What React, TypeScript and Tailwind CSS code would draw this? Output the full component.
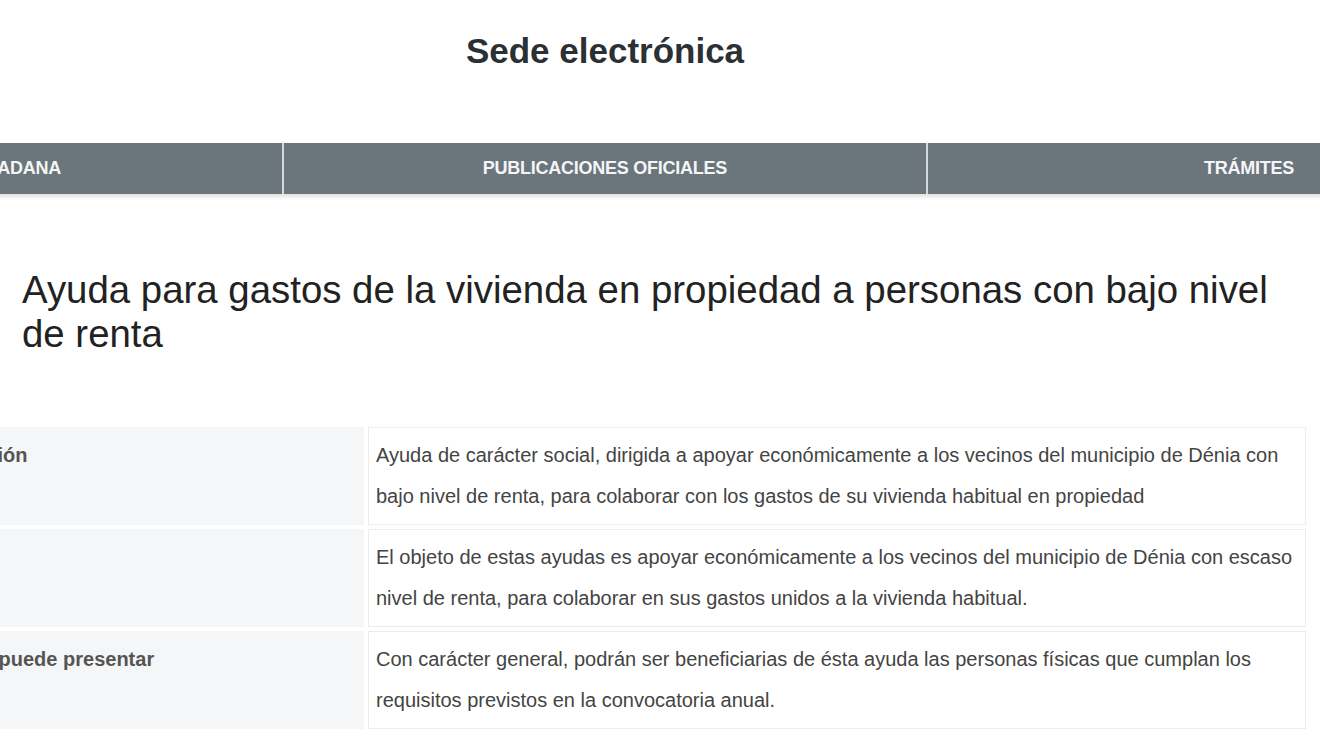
import React from "react";

const rows = [
  {
    label: "Descripción",
    text: "Ayuda de carácter social, dirigida a apoyar económicamente a los vecinos del municipio de Dénia con bajo nivel de renta, para colaborar con los gastos de su vivienda habitual en propiedad",
  },
  {
    label: "Finalidad",
    text: "El objeto de estas ayudas es apoyar económicamente a los vecinos del municipio de Dénia con escaso nivel de renta, para colaborar en sus gastos unidos a la vivienda habitual.",
  },
  {
    label: "Quién lo puede presentar",
    text: "Con carácter general, podrán ser beneficiarias de ésta ayuda las personas físicas que cumplan los requisitos previstos en la convocatoria anual.",
  },
];

export default function App() {
  return (
    <div
      className="w-[1320px] h-[742px] overflow-hidden bg-white"
      style={{ fontFamily: '"Liberation Sans", Arial, sans-serif' }}
    >
      <div className="h-[100px] w-[1210px] flex items-center justify-center">
        <h1 className="text-[35px] font-bold text-[#2b3035] leading-none">Sede electrónica</h1>
      </div>
      <nav className="mt-[43px] ml-[-362px] flex h-[51px] w-[1932px] bg-[#6b757c] shadow-[0_3px_4px_rgba(0,0,0,0.12)]">
        {["ATENCIÓN CIUDADANA", "PUBLICACIONES OFICIALES", "TRÁMITES"].map((t, i) => (
          <div
            key={t}
            className={`w-[644px] flex items-center justify-center text-[18px] font-bold text-[#f4f5f6] tracking-[-0.25px] ${i > 0 ? "border-l-2 border-[#d5d9dc]" : ""}`}
          >
            {t}
          </div>
        ))}
      </nav>
      <h2 className="mt-[74px] ml-[22px] w-[1275px] text-[38.4px] leading-[44px] font-normal text-[#222]">
        Ayuda para gastos de la vivienda en propiedad a personas con bajo nivel de renta
      </h2>
      <div className="mt-[71px] ml-[-95px] grid grid-cols-[459px_938px] gap-[4px]">
        {rows.map((r) => (
          <React.Fragment key={r.label}>
            <div className="bg-[#f5f6f8] px-2 py-2 text-[20px] leading-[41px] font-bold text-[#555]">
              {r.label}
            </div>
            <div className="border border-[#ececec] bg-white pl-[7px] pr-[7px] py-[7px] text-[20px] leading-[41px] text-[#444]">
              {r.text}
            </div>
          </React.Fragment>
        ))}
      </div>
    </div>
  );
}
